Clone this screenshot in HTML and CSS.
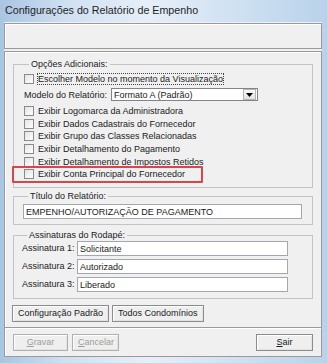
FILE: index.html
```html
<!DOCTYPE html>
<html lang="pt-br">

<head>
    <meta charset="UTF-8">
    <meta name="viewport" content="width=device-width, initial-scale=1.0">
    <title>Configurações do Relatório de Empenho</title>
    <link rel="stylesheet" href="styles.css">
</head>

<body>
    <div class="janela">
        <div class="titulo">Configurações do Relatório de Empenho</div>

        <div class="cliente">
            <div class="painel topo"></div>

            <div class="painel corpo">
                <fieldset class="grupo opcoes">
                    <legend>Opções Adicionais:</legend>

                    <div class="linha primeira">
                        <span class="caixa"></span>
                        <span class="foco">Escolher Modelo no momento da Visualização</span>
                    </div>

                    <div class="linha modelo">
                        <span>Modelo do Relatório:</span>
                        <div class="combo">
                            <span class="valor">Formato A (Padrão)</span>
                            <span class="seta">
                                <svg width="7" height="4" viewBox="0 0 7 4"><path d="M0 0h7L3.5 4z" fill="#000"/></svg>
                            </span>
                        </div>
                    </div>

                    <div class="marcados">
                        <div class="linha"><span class="caixa"></span>Exibir Logomarca da Administradora</div>
                        <div class="linha"><span class="caixa"></span>Exibir Dados Cadastrais do Fornecedor</div>
                        <div class="linha"><span class="caixa"></span>Exibir Grupo das Classes Relacionadas</div>
                        <div class="linha"><span class="caixa"></span>Exibir Detalhamento do Pagamento</div>
                        <div class="linha"><span class="caixa"></span>Exibir Detalhamento de Impostos Retidos</div>
                        <div class="linha destaque"><span class="caixa"></span>Exibir Conta Principal do Fornecedor</div>
                    </div>
                </fieldset>

                <fieldset class="grupo titulo-rel">
                    <legend>Título do Relatório:</legend>
                    <div class="campo largo">EMPENHO/AUTORIZAÇÃO DE PAGAMENTO</div>
                </fieldset>

                <fieldset class="grupo assinaturas">
                    <legend>Assinaturas do Rodapé:</legend>
                    <div class="assinatura"><span class="rotulo">Assinatura 1:</span><div class="campo">Solicitante</div></div>
                    <div class="assinatura"><span class="rotulo">Assinatura 2:</span><div class="campo">Autorizado</div></div>
                    <div class="assinatura"><span class="rotulo">Assinatura 3:</span><div class="campo">Liberado</div></div>
                </fieldset>

                <div class="acoes">
                    <button type="button" class="botao">Configuração Padrão</button>
                    <button type="button" class="botao">Todos Condomínios</button>
                </div>
            </div>

            <div class="painel rodape">
                <button type="button" class="botao inativo gravar"><u>G</u>ravar</button>
                <button type="button" class="botao inativo cancelar"><u>C</u>ancelar</button>
                <button type="button" class="botao sair"><u>S</u>air</button>
            </div>
        </div>
    </div>
</body>
</html>
```

FILE: styles.css
```css
body {
    margin: 0;
    font-family: "Liberation Sans", Arial, sans-serif;
    font-size: 9px;
    color: #1a1a1a;
    background-color: #ffffff;
}

.janela {
    width: 327px;
    height: 363px;
    box-sizing: border-box;
    padding: 0 5px 6px 4px;
    background: linear-gradient(to right, #a9c5e2 0%, #cfe0f2 20%, #e6eff9 45%, #cddff1 75%, #b9d2ea 100%);
}

.titulo {
    height: 22px;
    line-height: 21px;
    padding-left: 1px;
    font-size: 10.7px;
    color: #1e1e1e;
}

.cliente {
    height: 335px;
    background-color: #f0f0f0;
    padding-top: 1px;
    box-sizing: border-box;
}

.painel {
    box-sizing: border-box;
    border: 1px solid #9a9a9a;
    box-shadow: inset 1px 1px 0 #ffffff;
}

.topo {
    height: 26px;
}

.corpo {
    height: 277px;
    margin-top: 2px;
    padding: 7px 8px 0 8px;
}

.grupo {
    margin: 0;
    border: 1px solid #c3c3c3;
    padding: 0;
    min-width: 0;
}

.grupo legend {
    padding: 0 2px;
    margin-left: 5px;
    line-height: 11px;
    color: #1a1a1a;
}

.opcoes {
    padding: 2px 10px 6px 10px;
}

.linha {
    display: flex;
    align-items: center;
    height: 12.6px;
    white-space: nowrap;
}

.primeira {
    height: 13px;
}

.caixa {
    width: 8px;
    height: 8px;
    border: 1px solid #8a8a8a;
    background: linear-gradient(135deg, #e4e4e4, #ffffff);
    margin-right: 4px;
    flex-shrink: 0;
}

.foco {
    outline: 1px dotted #444444;
    line-height: 10px;
}

.modelo {
    height: 13px;
    margin-top: 3px;
    margin-bottom: 4px;
}

.combo {
    display: flex;
    align-items: center;
    margin-left: 4px;
    width: 147px;
    height: 13px;
    box-sizing: border-box;
    border: 1px solid #7f858e;
    background-color: #ffffff;
}

.valor {
    flex: 1;
    padding-left: 2px;
}

.seta {
    display: flex;
    align-items: center;
    justify-content: center;
    width: 11px;
    height: 9px;
    margin-right: 1px;
    border: 1px solid #b5b5b5;
    background: linear-gradient(#fafafa, #e2e2e2);
}

.destaque {
    position: relative;
}

.destaque::after {
    content: "";
    position: absolute;
    left: -12px;
    top: -2px;
    width: 187px;
    height: 13px;
    border: 2px solid #d8464b;
    border-radius: 1px;
}

.titulo-rel {
    margin-top: 3px;
    padding: 2px 10px 5px 9px;
}

.campo {
    height: 15px;
    line-height: 14px;
    box-sizing: border-box;
    border: 1px solid #a3a8b0;
    background-color: #ffffff;
    padding-left: 2px;
    white-space: nowrap;
}

.assinaturas {
    margin-top: 5px;
    padding: 0 0 6px 8px;
}

.assinatura {
    display: flex;
    align-items: center;
    height: 15px;
    margin-top: 3px;
}

.assinatura:first-of-type {
    margin-top: 0;
}

.rotulo {
    width: 55px;
}

.assinatura .campo {
    width: 211px;
}

.acoes {
    display: flex;
    gap: 3px;
    margin-top: 6px;
    margin-left: -1px;
}

.botao {
    font-family: "Liberation Sans", Arial, sans-serif;
    font-size: 9px;
    color: #1a1a1a;
    height: 17px;
    padding: 0 5px;
    margin: 0;
    border: 1px solid #8c8c8c;
    box-shadow: inset 1px 1px 0 #ffffff, inset -1px -1px 0 #e3e3e3;
    background-color: #efefef;
    border-radius: 0;
}

.rodape {
    height: 30px;
    margin-top: -1px;
    display: flex;
    align-items: center;
    padding: 0 8px 0 8px;
    gap: 4px;
}

.inativo {
    color: #9c9c9c;
    border-color: #b0b0b0;
}

.gravar {
    width: 55px;
}

.cancelar {
    width: 47px;
}

.sair {
    width: 57px;
    margin-left: auto;
}
```
